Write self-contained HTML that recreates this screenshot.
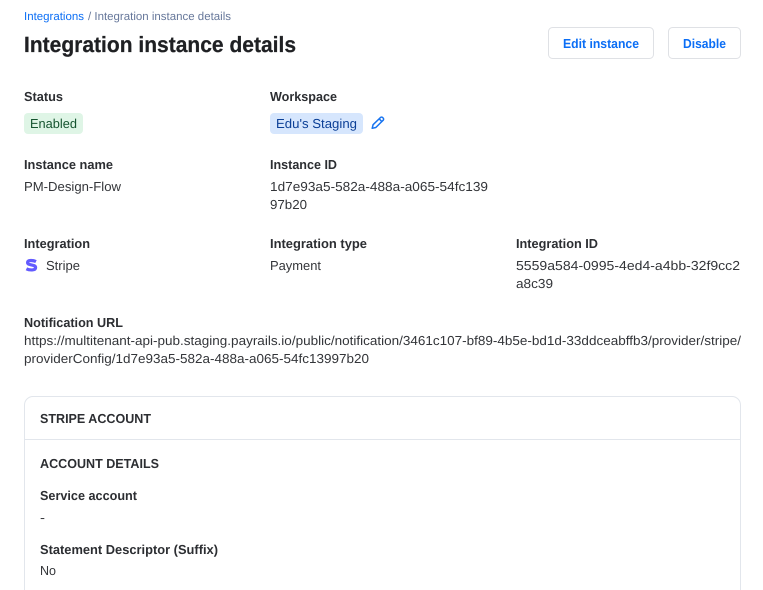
<!DOCTYPE html>
<html><head><meta charset="utf-8"><style>
html,body{margin:0;padding:0;background:#fff;width:763px;height:590px;overflow:hidden}
svg{display:block}
text{font-family:"Liberation Sans",sans-serif;font-size:13px;fill:#333539;text-rendering:geometricPrecision}
.l{font-weight:700;fill:#2c2e32}
.b{fill:#0b6ef5;font-weight:700;font-size:13px}
</style></head><body>
<svg width="763" height="590" viewBox="0 0 763 590" xmlns="http://www.w3.org/2000/svg">
<text x="24" y="20" style="font-size:11.5px;fill:#0b6ef5" textLength="60" lengthAdjust="spacingAndGlyphs">Integrations</text>
<text x="88" y="20" style="font-size:11.5px;fill:#66779a" textLength="143" lengthAdjust="spacingAndGlyphs">/ Integration instance details</text>
<text x="24" y="52" style="font-size:22px;font-weight:700;fill:#1f2023;stroke:#1f2023;stroke-width:.25" textLength="272" lengthAdjust="spacingAndGlyphs">Integration instance details</text>
<rect x="548.5" y="27.5" width="105" height="31" rx="4" fill="#fff" stroke="#dfe1e5"/>
<rect x="668.5" y="27.5" width="72" height="31" rx="4" fill="#fff" stroke="#dfe1e5"/>
<text class="b" x="563" y="48" textLength="76" lengthAdjust="spacingAndGlyphs">Edit instance</text>
<text class="b" x="683" y="48" textLength="43" lengthAdjust="spacingAndGlyphs">Disable</text>

<text class="l" x="24" y="101" textLength="39" lengthAdjust="spacingAndGlyphs">Status</text>
<text class="l" x="270" y="101" textLength="67" lengthAdjust="spacingAndGlyphs">Workspace</text>
<rect x="24" y="113" width="59" height="21" rx="4" fill="#dff5e6"/>
<text x="30" y="128" style="fill:#15542f" textLength="47" lengthAdjust="spacingAndGlyphs">Enabled</text>
<rect x="270" y="113" width="93" height="21" rx="4" fill="#d6e6fd"/>
<text x="276" y="128" style="fill:#0b3f96" textLength="81" lengthAdjust="spacingAndGlyphs">Edu's Staging</text>
<path d="M372.2 128.3 l.9-3.6 7.4-7.2 a1.5 1.5 0 0 1 2.1 0 l.6.6 a1.5 1.5 0 0 1 0 2.1 l-7.4 7.3 z M379.2 118.9 l2.9 2.9" fill="none" stroke="#1673f0" stroke-width="1.5" stroke-linejoin="round"/>

<text class="l" x="24" y="169" textLength="89" lengthAdjust="spacingAndGlyphs">Instance name</text>
<text class="l" x="270" y="169" textLength="67" lengthAdjust="spacingAndGlyphs">Instance ID</text>
<text x="24" y="191" textLength="97" lengthAdjust="spacingAndGlyphs">PM-Design-Flow</text>
<text x="270" y="191" textLength="218" lengthAdjust="spacingAndGlyphs">1d7e93a5-582a-488a-a065-54fc139</text>
<text x="270" y="209" textLength="37" lengthAdjust="spacingAndGlyphs">97b20</text>

<text class="l" x="24" y="248" textLength="66" lengthAdjust="spacingAndGlyphs">Integration</text>
<text class="l" x="270" y="248" textLength="97" lengthAdjust="spacingAndGlyphs">Integration type</text>
<text class="l" x="516" y="248" textLength="82" lengthAdjust="spacingAndGlyphs">Integration ID</text>
<path d="M36 261.6 C33.5 260.4 27.6 259.6 27.6 262.6 C27.6 265.8 35.6 264 35.6 267.6 C35.6 270.6 29.5 270.4 26.4 268.8" fill="none" stroke="#635bff" stroke-width="3.2"/>
<text x="46" y="270" textLength="34" lengthAdjust="spacingAndGlyphs">Stripe</text>
<text x="270" y="270" textLength="51" lengthAdjust="spacingAndGlyphs">Payment</text>
<text x="516" y="270" textLength="224" lengthAdjust="spacingAndGlyphs">5559a584-0995-4ed4-a4bb-32f9cc2</text>
<text x="516" y="288" textLength="37" lengthAdjust="spacingAndGlyphs">a8c39</text>

<text class="l" x="24" y="327" textLength="99" lengthAdjust="spacingAndGlyphs">Notification URL</text>
<text x="24" y="345" textLength="717" lengthAdjust="spacingAndGlyphs">https://multitenant-api-pub.staging.payrails.io/public/notification/3461c107-bf89-4b5e-bd1d-33ddceabffb3/provider/stripe/</text>
<text x="24" y="363" textLength="345" lengthAdjust="spacingAndGlyphs">providerConfig/1d7e93a5-582a-488a-a065-54fc13997b20</text>

<path d="M24.5 600 V405 a8.5 8.5 0 0 1 8.5-8.5 H732 a8.5 8.5 0 0 1 8.5 8.5 V600" fill="#fff" stroke="#e2e6ec"/>
<rect x="25" y="439" width="715" height="1" fill="#e2e6ec"/>
<text class="l" x="40" y="423" textLength="111" lengthAdjust="spacingAndGlyphs">STRIPE ACCOUNT</text>
<text class="l" x="40" y="468" textLength="119" lengthAdjust="spacingAndGlyphs">ACCOUNT DETAILS</text>
<text class="l" x="40" y="500" textLength="97" lengthAdjust="spacingAndGlyphs">Service account</text>
<text x="40" y="522" textLength="5" lengthAdjust="spacingAndGlyphs">-</text>
<text class="l" x="40" y="554" textLength="178" lengthAdjust="spacingAndGlyphs">Statement Descriptor (Suffix)</text>
<text x="40" y="575" textLength="16" lengthAdjust="spacingAndGlyphs">No</text>
</svg>
</body></html>
